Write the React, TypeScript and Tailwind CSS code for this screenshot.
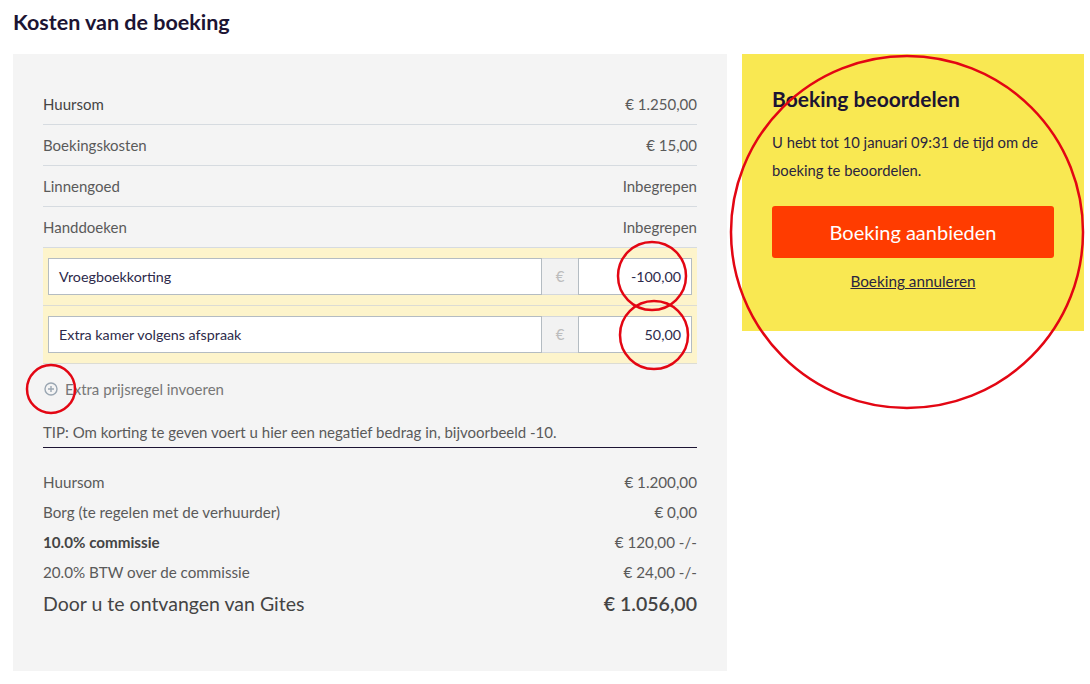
import React from "react";

const costRows = [
  { label: "Huursom", value: "€ 1.250,00", strong: true },
  { label: "Boekingskosten", value: "€ 15,00" },
  { label: "Linnengoed", value: "Inbegrepen" },
  { label: "Handdoeken", value: "Inbegrepen" },
];

const extraRows = [
  { label: "Vroegboekkorting", amount: "-100,00" },
  { label: "Extra kamer volgens afspraak", amount: "50,00" },
];

const summaryRows = [
  { label: "Huursom", value: "€ 1.200,00" },
  { label: "Borg (te regelen met de verhuurder)", value: "€ 0,00" },
  { label: "10.0% commissie", value: "€ 120,00 -/-", bold: true },
  { label: "20.0% BTW over de commissie", value: "€ 24,00 -/-" },
];

function PlusCircle() {
  return (
    <svg viewBox="0 0 14 14" className="w-[14px] h-[14px]" fill="none" stroke="#9aa6b2" strokeWidth={1.4}>
      <circle cx="7" cy="7" r="6" />
      <path d="M7 4v6M4 7h6" />
    </svg>
  );
}

export default function App() {
  return (
    <div className="relative w-[1090px] h-[684px] bg-white text-[#5a5a5a] overflow-hidden" style={{ fontFamily: "Lato, 'Open Sans', sans-serif" }}>
      <h2 className="pl-[13px] pt-[9px] h-[54px] text-[21.5px] leading-[26px] font-bold text-[#1c1433]">Kosten van de boeking</h2>

      <div className="flex gap-[15px] pl-[13px]">
        {/* left panel */}
        <div className="w-[714px] h-[617px] bg-[#f4f4f4] pt-[30px] px-[30px]">
          {costRows.map(r => (
            <div key={r.label} className="h-[41px] flex items-center justify-between border-b border-[#d6dbe0] text-[15px]">
              <span className={r.strong ? "text-[#444]" : ""}>{r.label}</span>
              <span>{r.value}</span>
            </div>
          ))}

          <div className="bg-[#fdf4cb]">
            {extraRows.map(r => (
              <div key={r.label} className="px-[5px] py-[10px] border-b border-[#dcdcd4]">
                <div className="flex h-[37px] text-[14.3px] text-[#2d2a4a]">
                  <div className="flex-1 bg-white border border-[#b4bcc2] flex items-center pl-[10px]">{r.label}</div>
                  <div className="w-[36px] bg-[#f2f2f2] border-y border-[#d4d8dc] flex items-center justify-center text-[15px] text-[#bdbdbd]">€</div>
                  <div className="w-[114px] bg-white border border-[#b4bcc2] flex items-center justify-end pr-[10px]">{r.amount}</div>
                </div>
              </div>
            ))}
          </div>

          <div className="h-[50px] flex items-center gap-[7px] pl-[1px] text-[15px] text-[#777]">
            <PlusCircle />
            <span>Extra prijsregel invoeren</span>
          </div>

          <div className="mt-[8px] pb-[5px] leading-[20px] text-[15px] text-[#5a5a5a] border-b-[1.5px] border-[#1c1433]">
            TIP: Om korting te geven voert u hier een negatief bedrag in, bijvoorbeeld -10.
          </div>

          <div className="mt-[19px]">
            {summaryRows.map(r => (
              <div key={r.label} className={"h-[30px] flex items-center justify-between text-[15.2px] " + (r.bold ? "font-bold text-[#444]" : "")}>
                <span>{r.label}</span>
                <span className="font-normal text-[#5a5a5a]">{r.value}</span>
              </div>
            ))}
            <div className="h-[34px] flex items-center justify-between text-[19.5px] text-[#444]">
              <span>Door u te ontvangen van Gites</span>
              <span className="font-semibold">€ 1.056,00</span>
            </div>
          </div>
        </div>

        {/* right card */}
        <div className="w-[342px] h-[277px] bg-[#f9e852] px-[30px] pt-[34px]">
          <h3 className="text-[21px] leading-[22px] font-bold text-[#1c1433]">Boeking beoordelen</h3>
          <p className="mt-[18px] text-[14.8px] leading-[28px] text-[#2a2440]">
            U hebt tot 10 januari 09:31 de tijd om de boeking te beoordelen.
          </p>
          <button className="mt-[22px] w-full h-[52px] rounded-[3px] bg-[#ff3c00] text-white text-[20px]">Boeking aanbieden</button>
          <div className="mt-[13px] text-center leading-[20px] text-[15.3px] text-[#2a2440] underline">Boeking annuleren</div>
        </div>
      </div>

      {/* annotation circles */}
      <svg className="absolute inset-0 pointer-events-none" width="1090" height="684" fill="none" stroke="#e30613" strokeWidth={2.5}>
        <ellipse cx="907" cy="232" rx="176" ry="176" />
        <circle cx="652" cy="276" r="34" />
        <circle cx="654" cy="335" r="34" />
        <circle cx="51" cy="389" r="24" />
      </svg>
    </div>
  );
}
